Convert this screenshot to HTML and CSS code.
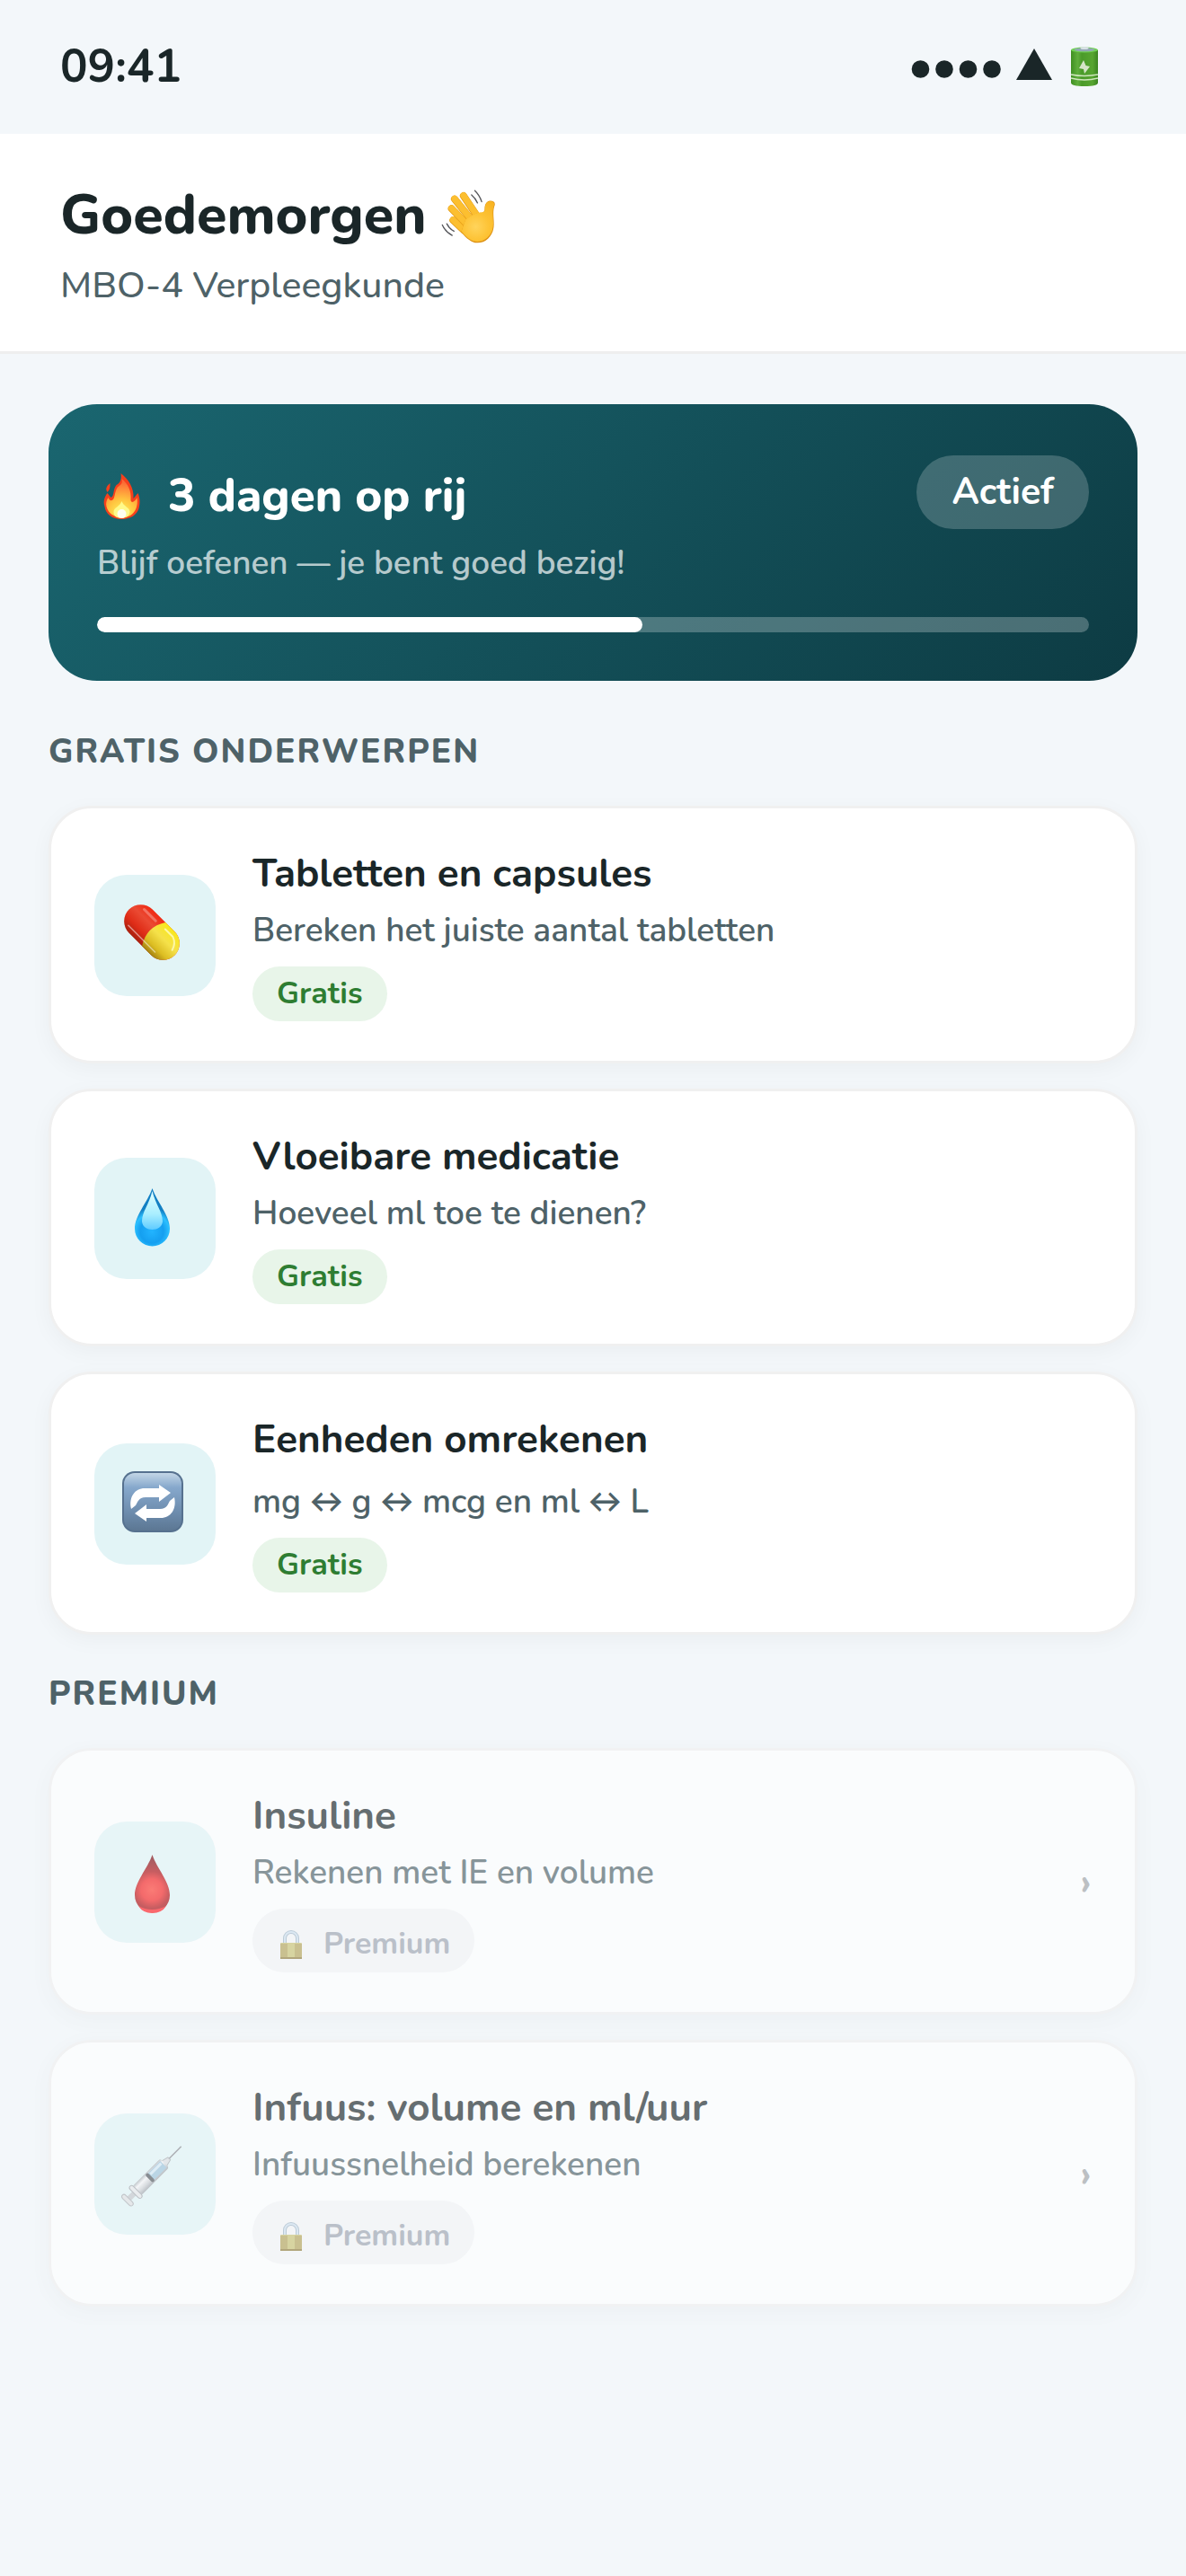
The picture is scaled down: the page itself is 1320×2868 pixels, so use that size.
FILE: index.html
```html
<!DOCTYPE html>
<html lang="nl">

<head>
    <meta charset="UTF-8">
    <meta name="viewport" content="width=device-width, initial-scale=1.0">
    <title>Medisch rekenen</title>
    <link rel="stylesheet" href="styles.css">
</head>

<body>

    <!-- Status bar -->
    <div class="status-bar">
        <span class="time">09:41</span>
        <svg class="status-icons" viewBox="0 0 208 44" aria-hidden="true">
            <defs>
                <linearGradient id="battery" x1="0" x2="1" y1="0" y2="0">
                    <stop offset="0" stop-color="#3f8f22" />
                    <stop offset="0.25" stop-color="#5fae3c" />
                    <stop offset="0.4" stop-color="#4a9a2a" />
                    <stop offset="0.8" stop-color="#57a531" />
                    <stop offset="1" stop-color="#3a8420" />
                </linearGradient>
            </defs>
            <g fill="#1a2628">
                <circle cx="10.500" cy="25" r="9.800" />
                <circle cx="37" cy="25" r="9.800" />
                <circle cx="63.500" cy="25" r="9.800" />
                <circle cx="90" cy="25" r="9.800" />
                <path d="M137 2L157 37H117Z" />
            </g>
            <path d="M178 4V40Q178 44 193 44Q208 44 208 40V4Z" fill="url(#battery)" />
            <ellipse cx="193" cy="3.500" rx="15" ry="3" fill="#6fd053" />
            <ellipse cx="193" cy="3.300" rx="11.500" ry="2" fill="#93a7b5" />
            <ellipse cx="193" cy="1.500" rx="4.500" ry="1.500" fill="#d8e0e5" />
            <path d="M178 31Q193 34 208 31M178 35Q193 39 208 35" fill="none" stroke="#cfe6bd" stroke-width="1.500" />
            <path d="M192 15L187 24L192 25L193 30L199 22L194.500 21Z" fill="#d5e4c8" />
        </svg>
    </div>

    <header class="header">
        <h1>
            Goedemorgen
            <svg class="wave" viewBox="36 22 184 184" aria-hidden="true">
                <defs>
                    <radialGradient id="hand" gradientUnits="userSpaceOnUse" cx="152" cy="150" r="100">
                        <stop offset="0" stop-color="#ffd45c" />
                        <stop offset="0.45" stop-color="#fdc335" />
                        <stop offset="1" stop-color="#f8b321" />
                    </radialGradient>
                </defs>
                <g fill="none" stroke-linecap="round">
                    <path d="M76 128L112 162" stroke="#e39a14" stroke-width="24" />
                    <path d="M76 127L112 161" stroke="#fcbf30" stroke-width="21" />
                    <path d="M71 89L126 146" stroke="#e39a14" stroke-width="24" />
                    <path d="M71 88L126 145" stroke="#fcbf30" stroke-width="21" />
                    <path d="M81 57L140 130" stroke="#e39a14" stroke-width="24" />
                    <path d="M81 56L140 129" stroke="#fcbf30" stroke-width="21" />
                    <path d="M111 46L158 116" stroke="#e39a14" stroke-width="24" />
                    <path d="M111 45L158 115" stroke="#fcbf30" stroke-width="21" />
                </g>
                <path d="M118 126Q150 104 168 103Q181 104 182 92C182 72 190 64 200 63Q218 63 216 77C208 98 213 118 213 142C213 178 188 205 157 204C138 203 122 190 103 168Z" fill="#dc8f12" />
                <path d="M118 125Q150 103 168 102Q182 102 183 92C183 72 191 65 200 64Q216 64 214 77C206 98 211 118 211 140C211 174 187 200 157 200C138 199 122 188 104 166Z" fill="url(#hand)" />
                <g fill="none" stroke="#55565a" stroke-width="4" stroke-linecap="round">
                    <path d="M149 29Q165 44 172 66" />
                    <path d="M138 43Q151 54 158 70" />
                    <path d="M40 144Q51 168 73 179" />
                    <path d="M55 140Q64 158 79 165" />
                </g>
            </svg>
        </h1>
        <p>MBO-4 Verpleegkunde</p>
    </header>

    <main class="content">

        <!-- Streak -->
        <section class="streak">
            <div class="streak-top">
                <h2>
                    <svg class="flame" viewBox="0 0 40 51" aria-hidden="true">
                        <defs>
                            <radialGradient id="fire" gradientUnits="userSpaceOnUse" cx="20" cy="44" r="34">
                                <stop offset="0" stop-color="#fff35c" />
                                <stop offset="0.45" stop-color="#ffc33f" />
                                <stop offset="0.8" stop-color="#ff8a3a" />
                                <stop offset="1" stop-color="#fb6a35" />
                            </radialGradient>
                        </defs>
                        <path d="M19 0C27 6 34 16 33 28L38 22C41 29 40 35 39 39C37 46 30 51 20 51C9 51 2 45 1 37C-1 31 1 26 4 22L8 27C12 25 10 18 14 13C19 11 20 5 19 0Z" fill="#f6401c" />
                        <path d="M7 11C2 15 2 18 4 21C7 18 7 15 7 11Z" fill="#f6401c" />
                        <path d="M20 6C27 12 31 19 30 30C31 34 35 31 37 27C38 32 37 36 36 39C33 46 28 49 20 49C12 49 5 45 3 37C2 33 3 30 5 27C7 32 11 31 12 25C13 20 14 16 17 14C20 12 21 10 20 6Z" fill="url(#fire)" />
                        <path d="M20 31C22 37 29 38 29 43C28 48 24 50 20 50C15 50 11 48 11 43C11 38 18 37 20 31Z" fill="#fff98a" />
                        <ellipse cx="20" cy="45" rx="5" ry="5" fill="#fffff0" />
                    </svg>
                    3 dagen op rij
                </h2>
                <span class="pill">Actief</span>
            </div>
            <p>Blijf oefenen — je bent goed bezig!</p>
            <div class="track" role="progressbar" aria-label="Voortgang" aria-valuenow="55" aria-valuemin="0" aria-valuemax="100">
                <div class="fill" style="width: 55%"></div>
            </div>
        </section>

        <!-- Free topics -->
        <h2 class="section-title">Gratis onderwerpen</h2>
        <div class="cards">
            <a class="card" href="#tabletten">
                <svg class="icon" viewBox="0 0 135 135" aria-hidden="true">
                    <defs>
                        <linearGradient id="pill-red" x1="0" x2="0" y1="0" y2="1">
                            <stop offset="0" stop-color="#f02a14" />
                            <stop offset="0.35" stop-color="#ea4a33" />
                            <stop offset="0.7" stop-color="#df2c17" />
                            <stop offset="1" stop-color="#a8200f" />
                        </linearGradient>
                        <linearGradient id="pill-yellow" x1="0" x2="0" y1="0" y2="1">
                            <stop offset="0" stop-color="#f8e81c" />
                            <stop offset="0.4" stop-color="#f5e14a" />
                            <stop offset="0.75" stop-color="#dcbd22" />
                            <stop offset="1" stop-color="#a58212" />
                        </linearGradient>
                    </defs>
                    <g transform="rotate(45 64 64)">
                        <rect x="28" y="45.500" width="72" height="37" rx="18.500" fill="url(#pill-red)" />
                        <path d="M67 45.500H81.500A18.500 18.500 0 0 1 81.500 82.500H67Q55 64 67 45.500Z" fill="url(#pill-yellow)" />
                        <path d="M40 52H58" stroke="#f58b7c" stroke-width="3" stroke-linecap="round" opacity="0.7" />
                        <path d="M40 77H82" stroke="#fff" stroke-width="1.500" stroke-linecap="round" opacity="0.5" />
                        <path d="M72 51H84Q92 54 94 62" fill="none" stroke="#fffbc0" stroke-width="2" stroke-linecap="round" opacity="0.8" />
                    </g>
                </svg>
                <div class="info">
                    <h3>Tabletten en capsules</h3>
                    <p>Bereken het juiste aantal tabletten</p>
                    <span class="tag free">Gratis</span>
                </div>
            </a>

            <a class="card" href="#vloeibaar">
                <svg class="icon" viewBox="0 0 135 135" aria-hidden="true">
                    <defs>
                        <radialGradient id="water" gradientUnits="userSpaceOnUse" cx="64" cy="82" r="26">
                            <stop offset="0" stop-color="#22b4ff" />
                            <stop offset="0.5" stop-color="#159ff0" />
                            <stop offset="0.75" stop-color="#2cc0ff" />
                            <stop offset="1" stop-color="#1380c4" />
                        </radialGradient>
                        <linearGradient id="water-shine" x1="0" x2="0" y1="0" y2="1">
                            <stop offset="0" stop-color="#e4ffff" />
                            <stop offset="0.6" stop-color="#a9eeff" />
                            <stop offset="1" stop-color="#5fcbff" />
                        </linearGradient>
                    </defs>
                    <path d="M64.500 34C70 50 84 64 84 79A19.500 19.500 0 0 1 45 79C45 64 59 50 64.500 34Z" fill="url(#water)" />
                    <path d="M64.500 37C68 52 76 60 76 71C75 83 54 83 53 71C53 60 61 52 64.500 37Z" fill="url(#water-shine)" />
                </svg>
                <div class="info">
                    <h3>Vloeibare medicatie</h3>
                    <p>Hoeveel ml toe te dienen?</p>
                    <span class="tag free">Gratis</span>
                </div>
            </a>

            <a class="card" href="#eenheden">
                <svg class="icon" viewBox="0 0 135 135" aria-hidden="true">
                    <defs>
                        <linearGradient id="key" x1="0" x2="0" y1="0" y2="1">
                            <stop offset="0" stop-color="#c3d6e6" />
                            <stop offset="0.25" stop-color="#86a8cc" />
                            <stop offset="0.7" stop-color="#6c8bac" />
                            <stop offset="1" stop-color="#5c7793" />
                        </linearGradient>
                    </defs>
                    <rect x="31" y="31" width="68" height="68" rx="14" fill="#56718f" />
                    <rect x="33" y="33" width="64" height="64" rx="12" fill="url(#key)" />
                    <g fill="#fff">
                        <path d="M41 73C38 60 45 50 56 50H72V46L85 55L72 65V60H57C49 60 48 66 46 69Z" />
                        <path d="M41 73C38 60 45 50 56 50H72V46L85 55L72 65V60H57C49 60 48 66 46 69Z" transform="rotate(180 65 66.500)" />
                    </g>
                </svg>
                <div class="info">
                    <h3>Eenheden omrekenen</h3>
                    <p class="units">mg ↔ g ↔ mcg en ml ↔ L</p>
                    <span class="tag free">Gratis</span>
                </div>
            </a>
        </div>

        <!-- Premium topics -->
        <h2 class="section-title premium-title">Premium</h2>
        <div class="cards">
            <a class="card locked" href="#insuline">
                <svg class="icon" viewBox="0 0 135 135" aria-hidden="true">
                    <defs>
                        <radialGradient id="blood" gradientUnits="userSpaceOnUse" cx="64" cy="76" r="34">
                            <stop offset="0" stop-color="#ff3a30" />
                            <stop offset="0.35" stop-color="#f52020" />
                            <stop offset="0.6" stop-color="#b00c10" />
                            <stop offset="1" stop-color="#7e0a10" />
                        </radialGradient>
                    </defs>
                    <path d="M64.500 37C70 53 84 67 84 82A19.500 19.500 0 0 1 45 82C45 67 59 53 64.500 37Z" fill="url(#blood)" />
                    <path d="M49 94Q64 102 80 94Q75 102 64.500 102Q54 102 49 94Z" fill="#ff1c22" />
                </svg>
                <div class="info">
                    <h3>Insuline</h3>
                    <p>Rekenen met IE en volume</p>
                    <span class="tag premium">
                        <svg class="lock" viewBox="0 0 32 32" aria-hidden="true">
                            <path d="M9 16V9A7 7 0 0 1 23 9V16" fill="none" stroke="#9fb4c4" stroke-width="4" />
                            <path d="M9 16V9A7 7 0 0 1 23 9V16" fill="none" stroke="#cfe0ee" stroke-width="2" />
                            <rect x="4" y="14" width="24" height="18" rx="1" fill="#c9c272" />
                            <path d="M4 15H12V31H4ZM20 15H28V31H20Z" fill="#b3a458" />
                            <path d="M4 31H28" stroke="#8f7c3a" stroke-width="2" />
                        </svg>
                        Premium
                    </span>
                </div>
                <span class="chevron">›</span>
            </a>

            <a class="card locked" href="#infuus">
                <svg class="icon" viewBox="0 0 135 135" aria-hidden="true">
                    <defs>
                        <linearGradient id="barrel" x1="0" x2="0" y1="0" y2="1">
                            <stop offset="0" stop-color="#aab0b5" />
                            <stop offset="0.3" stop-color="#f4f5f6" />
                            <stop offset="0.7" stop-color="#c8ccd0" />
                            <stop offset="1" stop-color="#9da3a9" />
                        </linearGradient>
                    </defs>
                    <g transform="rotate(-45 64.500 69)">
                        <path d="M90 69H110" stroke="#85898e" stroke-width="1.500" />
                        <path d="M83 65L91 67V71L83 73Z" fill="#d9dde0" stroke="#a5aaae" />
                        <rect x="26" y="66" width="14" height="6" fill="#c3c7cb" />
                        <rect x="23" y="61" width="5" height="16" rx="3" fill="#dfe1e3" stroke="#a8acb0" />
                        <rect x="40" y="62" width="44" height="14" rx="3" fill="url(#barrel)" />
                        <rect x="62" y="64" width="20" height="10" fill="#9cc3da" />
                        <rect x="64" y="65" width="17" height="3" fill="#d4e8f4" />
                        <rect x="59" y="63" width="4" height="12" rx="2" fill="#4f555b" />
                        <rect x="36" y="60" width="5" height="18" rx="3" fill="#e6e8ea" stroke="#a0a5aa" />
                    </g>
                </svg>
                <div class="info">
                    <h3>Infuus: volume en ml/uur</h3>
                    <p>Infuussnelheid berekenen</p>
                    <span class="tag premium">
                        <svg class="lock" viewBox="0 0 32 32" aria-hidden="true">
                            <path d="M9 16V9A7 7 0 0 1 23 9V16" fill="none" stroke="#9fb4c4" stroke-width="4" />
                            <path d="M9 16V9A7 7 0 0 1 23 9V16" fill="none" stroke="#cfe0ee" stroke-width="2" />
                            <rect x="4" y="14" width="24" height="18" rx="1" fill="#c9c272" />
                            <path d="M4 15H12V31H4ZM20 15H28V31H20Z" fill="#b3a458" />
                            <path d="M4 31H28" stroke="#8f7c3a" stroke-width="2" />
                        </svg>
                        Premium
                    </span>
                </div>
                <span class="chevron">›</span>
            </a>
        </div>

    </main>

</body>

</html>
```
FILE: styles.css
```css
* {
    box-sizing: border-box;
    margin: 0;
    padding: 0;
}

body {
    background-color: #f3f7fa;
    color: #1a2628;
    font-family: Nunito, Lato, "Open Sans", sans-serif;
    min-height: 100vh;
}

/* status bar */
.status-bar {
    display: flex;
    justify-content: space-between;
    align-items: center;
    padding: 39px 98px 40px 67px;
}

.time {
    font-size: 51px;
    line-height: 70px;
    font-weight: 700;
}

.status-icons {
    width: 208px;
    height: 44px;
}

/* header */
.header {
    background-color: white;
    border-bottom: 3px solid #eeeeee;
    padding: 50px 67px 45px;
}

.header h1 {
    display: flex;
    align-items: center;
    gap: 17px;
    font-size: 61px;
    line-height: 83px;
    font-weight: 800;
}

.wave {
    width: 61px;
    height: 61px;
}

.header p {
    margin-top: 8px;
    font-size: 41px;
    line-height: 56px;
    font-weight: 500;
    color: #4e6268;
}

.content {
    padding: 56px 54px;
}

/* streak card */
.streak {
    background: linear-gradient(135deg, #1a6670 0%, #0d3b43 100%);
    border-radius: 54px;
    padding: 54px;
    color: white;
}

.streak-top {
    display: flex;
    justify-content: space-between;
    align-items: center;
    height: 88px;
}

.streak h2 {
    display: flex;
    align-items: center;
    gap: 29px;
    padding: 8px 5px 0;
    font-size: 51px;
    line-height: 70px;
    font-weight: 800;
}

.flame {
    width: 45px;
    height: 51px;
}

.pill {
    background-color: rgba(255, 255, 255, 0.2);
    border-radius: 41px;
    padding: 13px 39px;
    font-size: 41px;
    line-height: 56px;
    font-weight: 700;
}

.streak p {
    margin-top: 10px;
    font-size: 37px;
    line-height: 51px;
    font-weight: 600;
    color: rgba(255, 255, 255, 0.7);
}

.track {
    margin-top: 34px;
    height: 17px;
    border-radius: 9px;
    background-color: rgba(255, 255, 255, 0.25);
    overflow: hidden;
}

.fill {
    height: 100%;
    border-radius: 9px;
    background-color: white;
}

/* section titles */
.section-title {
    margin: 55px 0 35px;
    font-size: 37px;
    line-height: 49px;
    font-weight: 800;
    letter-spacing: 2px;
    text-transform: uppercase;
    color: #4e6268;
}

.premium-title {
    margin-top: 42px;
}

/* topic cards */
.cards {
    display: flex;
    flex-direction: column;
    gap: 28px;
}

.card {
    display: flex;
    align-items: center;
    gap: 41px;
    padding: 43px 48px 41px;
    background-color: white;
    border: 3px solid #f0f0f0;
    border-radius: 48px;
    box-shadow: 0 6px 24px rgba(0, 0, 0, 0.04);
    color: inherit;
    text-decoration: none;
}

.card.locked {
    opacity: 0.65;
}

.icon {
    flex-shrink: 0;
    width: 135px;
    height: 135px;
    border-radius: 36px;
    background-color: #e2f4f6;
}

.info {
    flex: 1;
    display: flex;
    flex-direction: column;
    align-items: flex-start;
    padding-bottom: 3px;
}

.info h3 {
    font-size: 44px;
    line-height: 60px;
    font-weight: 700;
}

.info p {
    margin-top: 8px;
    font-size: 37px;
    line-height: 51px;
    font-weight: 600;
    color: #4e6268;
}

.info .units {
    padding-top: 6px;
}

.tag {
    margin-top: 14px;
    padding: 7px 27px;
    border-radius: 36px;
    font-size: 34px;
    line-height: 47px;
    font-weight: 700;
}

.free {
    background-color: #e8f5e9;
    color: #2e7d32;
}

.premium {
    display: flex;
    align-items: center;
    gap: 20px;
    padding: 16px 27px 8px;
    background-color: #f3f4f6;
    color: #9ca3af;
}

.lock {
    width: 32px;
    height: 32px;
}

.chevron {
    font-size: 44px;
    line-height: 60px;
    font-weight: 700;
    color: #a0a4a7;
}
```
